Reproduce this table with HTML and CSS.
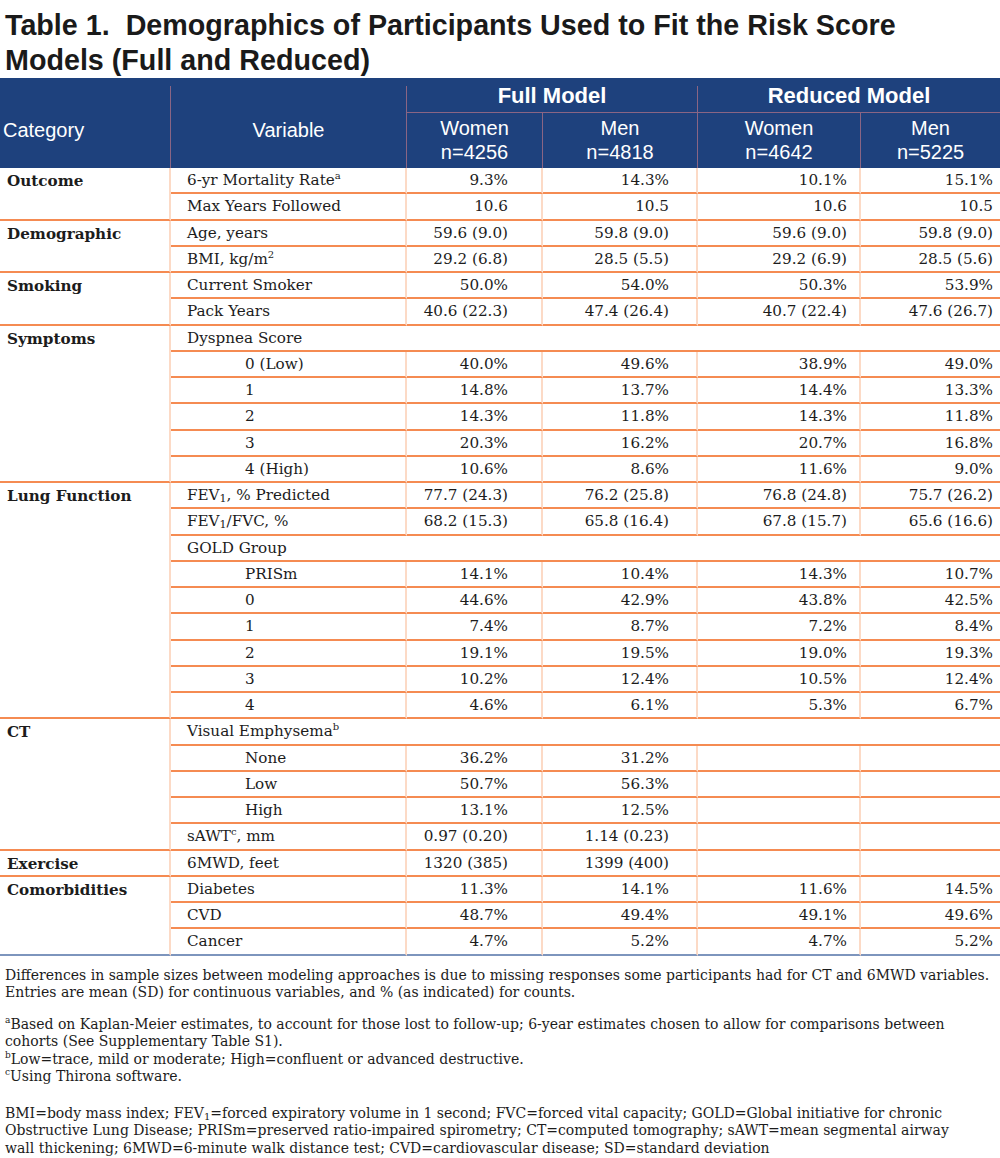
FILE: index.html
```html
<!DOCTYPE html>
<html>
<head>
<meta charset="utf-8">
<link rel="stylesheet" href="styles.css">
</head>
<body>
<h1 class="title">Table 1.&nbsp; Demographics of Participants Used to Fit the Risk Score<br>Models (Full and Reduced)</h1>
<div class="band"></div>
<table class="demo">
  <colgroup>
    <col class="c-cat"><col class="c-var"><col class="c-fw"><col class="c-fm"><col class="c-rw"><col class="c-rm">
  </colgroup>
  <thead>
    <tr class="h1">
      <th rowspan="2" class="h-cat">Category</th>
      <th rowspan="2" class="h-var">Variable</th>
      <th colspan="2" class="h-model">Full Model</th>
      <th colspan="2" class="h-model last">Reduced Model</th>
    </tr>
    <tr class="h2">
      <th class="h-n">Women<br>n=4256</th>
      <th class="h-n">Men<br>n=4818</th>
      <th class="h-n">Women<br>n=4642</th>
      <th class="h-n last">Men<br>n=5225</th>
    </tr>
  </thead>
  <tbody>
    <tr><td rowspan="2" class="cat">Outcome</td><td class="var">6-yr Mortality Rate<sup>a</sup></td><td class="n fw">9.3%</td><td class="n fm">14.3%</td><td class="n rw">10.1%</td><td class="n rm">15.1%</td></tr>
    <tr class="endcat"><td class="var">Max Years Followed</td><td class="n fw">10.6</td><td class="n fm">10.5</td><td class="n rw">10.6</td><td class="n rm">10.5</td></tr>

    <tr><td rowspan="2" class="cat">Demographic</td><td class="var">Age, years</td><td class="n fw">59.6 (9.0)</td><td class="n fm">59.8 (9.0)</td><td class="n rw">59.6 (9.0)</td><td class="n rm">59.8 (9.0)</td></tr>
    <tr class="endcat"><td class="var">BMI, kg/m<sup>2</sup></td><td class="n fw">29.2 (6.8)</td><td class="n fm">28.5 (5.5)</td><td class="n rw">29.2 (6.9)</td><td class="n rm">28.5 (5.6)</td></tr>

    <tr><td rowspan="2" class="cat">Smoking</td><td class="var">Current Smoker</td><td class="n fw">50.0%</td><td class="n fm">54.0%</td><td class="n rw">50.3%</td><td class="n rm">53.9%</td></tr>
    <tr class="endcat"><td class="var">Pack Years</td><td class="n fw">40.6 (22.3)</td><td class="n fm">47.4 (26.4)</td><td class="n rw">40.7 (22.4)</td><td class="n rm">47.6 (26.7)</td></tr>

    <tr><td rowspan="6" class="cat">Symptoms</td><td colspan="5" class="var span">Dyspnea Score</td></tr>
    <tr><td class="var sub">0 (Low)</td><td class="n fw">40.0%</td><td class="n fm">49.6%</td><td class="n rw">38.9%</td><td class="n rm">49.0%</td></tr>
    <tr><td class="var sub">1</td><td class="n fw">14.8%</td><td class="n fm">13.7%</td><td class="n rw">14.4%</td><td class="n rm">13.3%</td></tr>
    <tr><td class="var sub">2</td><td class="n fw">14.3%</td><td class="n fm">11.8%</td><td class="n rw">14.3%</td><td class="n rm">11.8%</td></tr>
    <tr><td class="var sub">3</td><td class="n fw">20.3%</td><td class="n fm">16.2%</td><td class="n rw">20.7%</td><td class="n rm">16.8%</td></tr>
    <tr class="endcat"><td class="var sub">4 (High)</td><td class="n fw">10.6%</td><td class="n fm">8.6%</td><td class="n rw">11.6%</td><td class="n rm">9.0%</td></tr>

    <tr><td rowspan="9" class="cat">Lung Function</td><td class="var">FEV<sub>1</sub>, % Predicted</td><td class="n fw">77.7 (24.3)</td><td class="n fm">76.2 (25.8)</td><td class="n rw">76.8 (24.8)</td><td class="n rm">75.7 (26.2)</td></tr>
    <tr><td class="var">FEV<sub>1</sub>/FVC, %</td><td class="n fw">68.2 (15.3)</td><td class="n fm">65.8 (16.4)</td><td class="n rw">67.8 (15.7)</td><td class="n rm">65.6 (16.6)</td></tr>
    <tr><td colspan="5" class="var span">GOLD Group</td></tr>
    <tr><td class="var sub">PRISm</td><td class="n fw">14.1%</td><td class="n fm">10.4%</td><td class="n rw">14.3%</td><td class="n rm">10.7%</td></tr>
    <tr><td class="var sub">0</td><td class="n fw">44.6%</td><td class="n fm">42.9%</td><td class="n rw">43.8%</td><td class="n rm">42.5%</td></tr>
    <tr><td class="var sub">1</td><td class="n fw">7.4%</td><td class="n fm">8.7%</td><td class="n rw">7.2%</td><td class="n rm">8.4%</td></tr>
    <tr><td class="var sub">2</td><td class="n fw">19.1%</td><td class="n fm">19.5%</td><td class="n rw">19.0%</td><td class="n rm">19.3%</td></tr>
    <tr><td class="var sub">3</td><td class="n fw">10.2%</td><td class="n fm">12.4%</td><td class="n rw">10.5%</td><td class="n rm">12.4%</td></tr>
    <tr class="endcat"><td class="var sub">4</td><td class="n fw">4.6%</td><td class="n fm">6.1%</td><td class="n rw">5.3%</td><td class="n rm">6.7%</td></tr>

    <tr><td rowspan="5" class="cat">CT</td><td colspan="5" class="var span">Visual Emphysema<sup>b</sup></td></tr>
    <tr><td class="var sub">None</td><td class="n fw">36.2%</td><td class="n fm">31.2%</td><td class="n rw"></td><td class="n rm"></td></tr>
    <tr><td class="var sub">Low</td><td class="n fw">50.7%</td><td class="n fm">56.3%</td><td class="n rw"></td><td class="n rm"></td></tr>
    <tr><td class="var sub">High</td><td class="n fw">13.1%</td><td class="n fm">12.5%</td><td class="n rw"></td><td class="n rm"></td></tr>
    <tr class="endcat"><td class="var">sAWT<sup>c</sup>, mm</td><td class="n fw">0.97 (0.20)</td><td class="n fm">1.14 (0.23)</td><td class="n rw"></td><td class="n rm"></td></tr>

    <tr class="endcat"><td class="cat">Exercise</td><td class="var">6MWD, feet</td><td class="n fw">1320 (385)</td><td class="n fm">1399 (400)</td><td class="n rw"></td><td class="n rm"></td></tr>

    <tr><td rowspan="3" class="cat lastrow">Comorbidities</td><td class="var">Diabetes</td><td class="n fw">11.3%</td><td class="n fm">14.1%</td><td class="n rw">11.6%</td><td class="n rm">14.5%</td></tr>
    <tr><td class="var">CVD</td><td class="n fw">48.7%</td><td class="n fm">49.4%</td><td class="n rw">49.1%</td><td class="n rm">49.6%</td></tr>
    <tr class="lastrow"><td class="var">Cancer</td><td class="n fw">4.7%</td><td class="n fm">5.2%</td><td class="n rw">4.7%</td><td class="n rm">5.2%</td></tr>
  </tbody>
</table>

<div class="notes">
  <p>Differences in sample sizes between modeling approaches is due to missing responses some participants had for CT and 6MWD variables.<br>Entries are mean (SD) for continuous variables, and % (as indicated) for counts.</p>
  <p><sup>a</sup>Based on Kaplan-Meier estimates, to account for those lost to follow-up; 6-year estimates chosen to allow for comparisons between<br>cohorts (See Supplementary Table S1).<br><sup>b</sup>Low=trace, mild or moderate; High=confluent or advanced destructive.<br><sup>c</sup>Using Thirona software.</p>
  <p class="abbr">BMI=body mass index; FEV<sub>1</sub>=forced expiratory volume in 1 second; FVC=forced vital capacity; GOLD=Global initiative for chronic<br>Obstructive Lung Disease; PRISm=preserved ratio-impaired spirometry; CT=computed tomography; sAWT=mean segmental airway<br>wall thickening; 6MWD=6-minute walk distance test; CVD=cardiovascular disease; SD=standard deviation</p>
</div>
</body>
</html>
```

FILE: styles.css
```css
html, body {
  margin: 0;
  padding: 0;
  background: #ffffff;
}

body {
  width: 1000px;
  color: #1c1c1c;
}

.title {
  margin: 0;
  padding: 8px 0 0 5px;
  font-family: "Liberation Sans", Arial, sans-serif;
  font-weight: bold;
  font-size: 28.7px;
  line-height: 35px;
  color: #1a1a1a;
  white-space: nowrap;
}

.band {
  height: 8px;
  background: #1e417d;
}

.demo {
  width: 1000px;
  table-layout: fixed;
  border-collapse: separate;
  border-spacing: 0;
}

.c-cat { width: 171px; }
.c-var { width: 236px; }
.c-fw { width: 136px; }
.c-fm { width: 155px; }
.c-rw { width: 163px; }
.c-rm { width: 139px; }

/* header */
.demo thead th {
  background: #1e417d;
  color: #ffffff;
  font-family: "Liberation Sans", Arial, sans-serif;
  font-weight: normal;
  font-size: 20px;
  line-height: 24px;
  padding: 0;
  border-right: 1px solid #8a6584;
  vertical-align: top;
}

.demo thead th.last {
  border-right: none;
}

.h1 th {
  height: 27px;
}

.h-cat {
  text-align: left;
  padding: 32px 0 0 3px !important;
}

.h-var {
  text-align: center;
  padding-top: 32px !important;
}

.demo thead th.h-model {
  font-weight: bold;
  font-size: 22px;
  line-height: 20px;
  text-align: center;
  border-bottom: 1px solid #8a6584;
  box-sizing: border-box;
}

.demo thead th.h-n {
  text-align: center;
  padding: 3px 0 3px 0;
  height: 55px;
  box-sizing: border-box;
}

/* body */
.demo tbody td {
  font-family: "DejaVu Serif", "Liberation Serif", serif;
  font-size: 15.2px;
  line-height: 20px;
  height: 26.25px;
  padding: 0;
  box-sizing: border-box;
  border-bottom: 2px solid #f58b52;
  border-right: 2px solid #fcdac6;
  vertical-align: middle;
  white-space: nowrap;
  color: #1c1c1c;
}

.demo tbody td.rm,
.demo tbody td.span {
  border-right: none;
}

.demo tbody td.cat {
  font-weight: bold;
  vertical-align: top;
  padding: 3px 0 0 7px;
}

.demo tbody td.var {
  padding-left: 16px;
}

.demo tbody td.sub {
  padding-left: 74px;
}

.demo tbody td.n {
  text-align: right;
}

.demo tbody td.fw { padding-right: 33px; }
.demo tbody td.fm { padding-right: 27px; }
.demo tbody td.rw { padding-right: 12px; }
.demo tbody td.rm { padding-right: 7px; }

.demo tbody tr.lastrow td,
.demo tbody td.cat.lastrow {
  border-bottom: 2px solid #7d95bd;
}

.demo sup {
  font-size: 10px;
  line-height: 0;
  vertical-align: 6px;
}

.demo sub {
  font-size: 11px;
  line-height: 0;
  vertical-align: -2px;
}

/* notes */
.notes {
  padding: 11px 0 0 5px;
  font-family: "DejaVu Serif", "Liberation Serif", serif;
  font-size: 14px;
  line-height: 17.5px;
  color: #1c1c1c;
  white-space: nowrap;
}

.notes p {
  margin: 0 0 14px 0;
}

.notes p.abbr {
  margin-top: 19px;
}

.notes sup {
  font-size: 9px;
  line-height: 0;
  vertical-align: 6px;
}

.notes sub {
  font-size: 10px;
  line-height: 0;
  vertical-align: -2px;
}
```
